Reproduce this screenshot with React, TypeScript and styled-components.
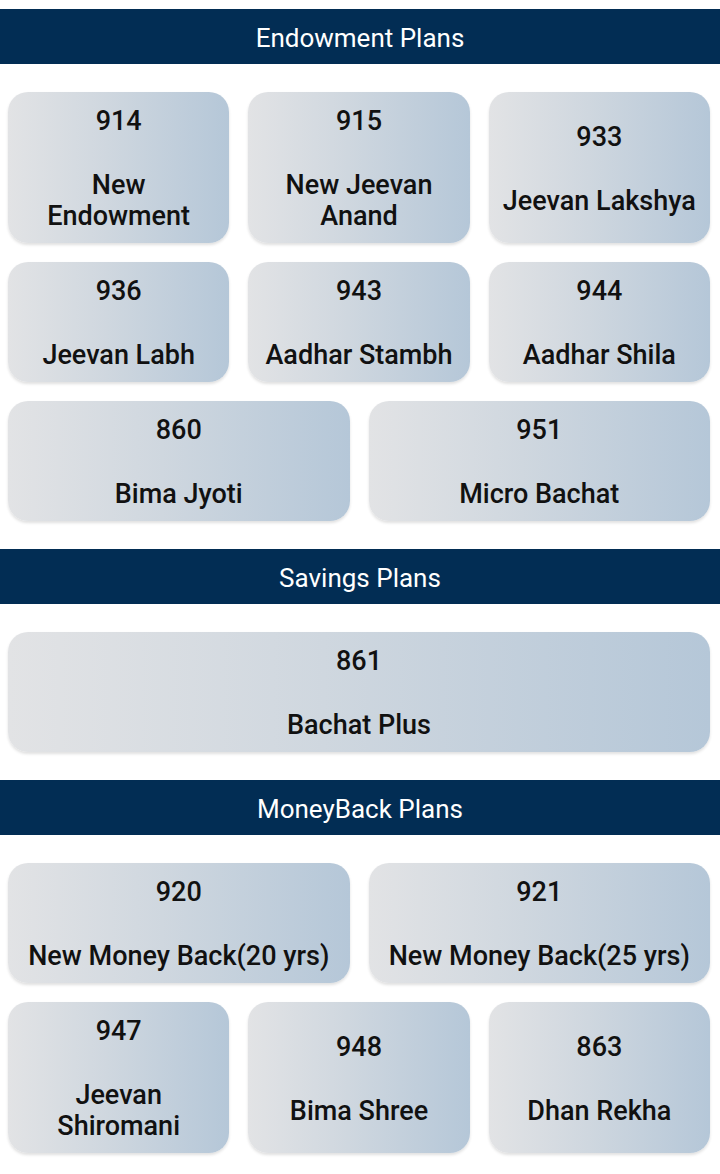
import React from "react";
import styled, { createGlobalStyle } from "styled-components";

const Global = createGlobalStyle`
  html, body { margin: 0; padding: 0; background: #ffffff; }
  body { font-family: Roboto, "Liberation Sans", Arial, sans-serif; }
`;

const Page = styled.div`
  padding: 9px 0 0;
  display: flex;
  flex-direction: column;
`;

const Header = styled.div`
  height: 55px;
  background: #022d54;
  color: #ffffff;
  display: flex;
  align-items: center;
  justify-content: center;
  font-size: 26px;
  font-weight: 400;
  padding-top: 2px;
  box-sizing: border-box;
`;

const Section = styled.section`
  padding: 28px 10px 28px 8px;
  display: flex;
  flex-direction: column;
  gap: 19px;
`;

const Row = styled.div<{ $cols: number }>`
  display: grid;
  grid-template-columns: repeat(${(p) => p.$cols}, 1fr);
  column-gap: 19px;
`;

const Card = styled.div`
  min-height: 120px;
  box-sizing: border-box;
  border-radius: 20px;
  background: linear-gradient(90deg, #e2e3e5 0%, #cfd7df 45%, #b5c7d8 100%);
  box-shadow: 0 2px 3px rgba(0, 0, 0, 0.12);
  padding: 14px 12px 11px;
  display: flex;
  flex-direction: column;
  justify-content: center;
  align-items: center;
  text-align: center;
  color: #111111;
  font-size: 27px;
  font-weight: 500;
`;

const Code = styled.div`
  line-height: 31px;
`;

const Name = styled.div`
  margin-top: 33px;
  line-height: 31px;
`;

type Plan = { code: string; name: string };

const sections: { title: string; rows: Plan[][] }[] = [
  {
    title: "Endowment Plans",
    rows: [
      [
        { code: "914", name: "New Endowment" },
        { code: "915", name: "New Jeevan Anand" },
        { code: "933", name: "Jeevan Lakshya" },
      ],
      [
        { code: "936", name: "Jeevan Labh" },
        { code: "943", name: "Aadhar Stambh" },
        { code: "944", name: "Aadhar Shila" },
      ],
      [
        { code: "860", name: "Bima Jyoti" },
        { code: "951", name: "Micro Bachat" },
      ],
    ],
  },
  {
    title: "Savings Plans",
    rows: [[{ code: "861", name: "Bachat Plus" }]],
  },
  {
    title: "MoneyBack Plans",
    rows: [
      [
        { code: "920", name: "New Money Back(20 yrs)" },
        { code: "921", name: "New Money Back(25 yrs)" },
      ],
      [
        { code: "947", name: "Jeevan Shiromani" },
        { code: "948", name: "Bima Shree" },
        { code: "863", name: "Dhan Rekha" },
      ],
    ],
  },
];

export default function App() {
  return (
    <>
      <Global />
      <Page>
        {sections.map((s) => (
          <React.Fragment key={s.title}>
            <Header>{s.title}</Header>
            <Section>
              {s.rows.map((r, i) => (
                <Row key={i} $cols={r.length}>
                  {r.map((p) => (
                    <Card key={p.code}>
                      <Code>{p.code}</Code>
                      <Name>{p.name}</Name>
                    </Card>
                  ))}
                </Row>
              ))}
            </Section>
          </React.Fragment>
        ))}
      </Page>
    </>
  );
}
